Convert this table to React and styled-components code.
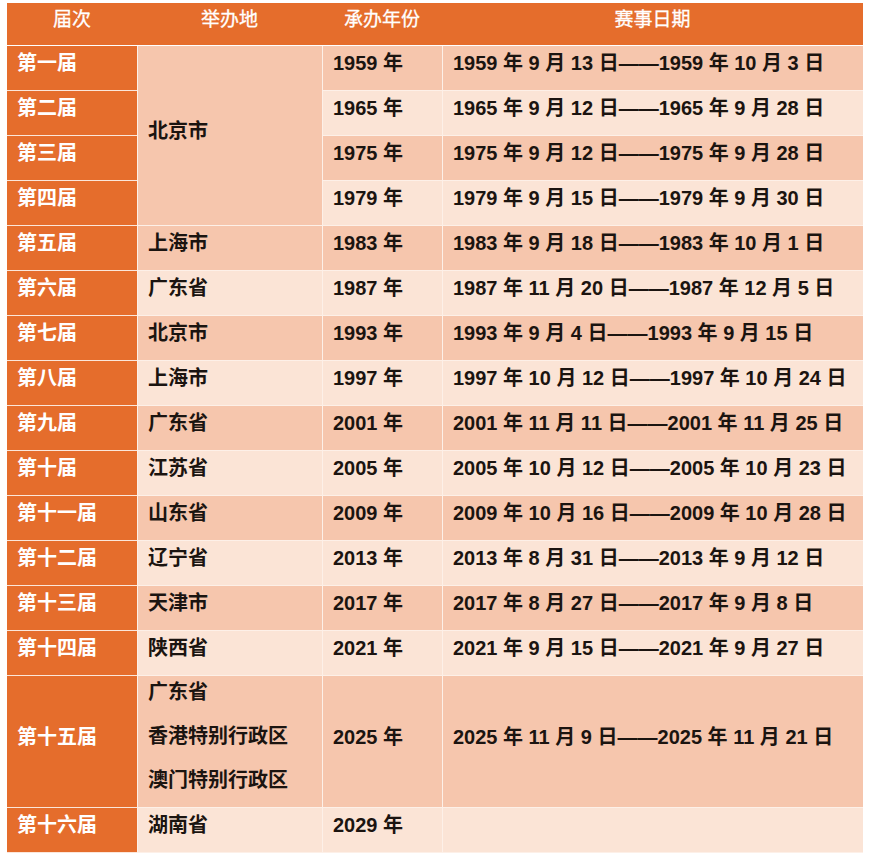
import React from "react";
import styled, { createGlobalStyle } from "styled-components";

const GlobalStyle = createGlobalStyle`
  html, body {
    margin: 0;
    padding: 0;
    background: #ffffff;
  }
  body {
    font-family: "Liberation Sans", "Noto Sans CJK SC", sans-serif;
  }
`;

const Page = styled.div`
  padding: 3px 11px 0 7px;
`;

const Table = styled.table`
  border-collapse: separate;
  border-spacing: 0;
  table-layout: fixed;
  width: 856px;
`;

const HeaderCell = styled.th`
  background: #e56d2c;
  color: #ffffff;
  font-family: "Liberation Sans", "Noto Sans CJK SC", sans-serif;
  font-size: 19px;
  font-weight: 400;
  -webkit-text-stroke: 0.3px #ffffff;
  line-height: 26px;
  height: 43px;
  box-sizing: border-box;
  padding: 0 0 8px 0;
  text-align: center;
  vertical-align: middle;
  border-bottom: 1px solid #ffffff;
`;

const RankCell = styled.td`
  background: #e56d2c;
  color: #ffffff;
  font-size: 20px;
  font-weight: bold;
  line-height: 26px;
  height: ${(p) => (p.$tall ? "132px" : "45px")};
  box-sizing: border-box;
  padding: 0 0 10px 10px;
  vertical-align: middle;
  border-bottom: 1px solid #fbe6da;
  white-space: nowrap;
`;

const Cell = styled.td`
  background: ${(p) => (p.$light ? "#fbe4d6" : "#f6c6ad")};
  color: #1b1410;
  font-size: 20px;
  font-weight: bold;
  line-height: 26px;
  height: 45px;
  box-sizing: border-box;
  padding: 0 0 ${(p) => (p.$tight ? "0" : "10px")} 10px;
  vertical-align: middle;
  border-bottom: 1px solid #fdf0e8;
  border-left: 1px solid #fdf0e8;
  white-space: nowrap;
`;

const Lines = styled.div`
  margin-top: -12px;
  line-height: 44px;
`;

const rows = [
  ["第一届", null, "1959 年", "1959 年 9 月 13 日——1959 年 10 月 3 日"],
  ["第二届", null, "1965 年", "1965 年 9 月 12 日——1965 年 9 月 28 日"],
  ["第三届", null, "1975 年", "1975 年 9 月 12 日——1975 年 9 月 28 日"],
  ["第四届", null, "1979 年", "1979 年 9 月 15 日——1979 年 9 月 30 日"],
  ["第五届", "上海市", "1983 年", "1983 年 9 月 18 日——1983 年 10 月 1 日"],
  ["第六届", "广东省", "1987 年", "1987 年 11 月 20 日——1987 年 12 月 5 日"],
  ["第七届", "北京市", "1993 年", "1993 年 9 月 4 日——1993 年 9 月 15 日"],
  ["第八届", "上海市", "1997 年", "1997 年 10 月 12 日——1997 年 10 月 24 日"],
  ["第九届", "广东省", "2001 年", "2001 年 11 月 11 日——2001 年 11 月 25 日"],
  ["第十届", "江苏省", "2005 年", "2005 年 10 月 12 日——2005 年 10 月 23 日"],
  ["第十一届", "山东省", "2009 年", "2009 年 10 月 16 日——2009 年 10 月 28 日"],
  ["第十二届", "辽宁省", "2013 年", "2013 年 8 月 31 日——2013 年 9 月 12 日"],
  ["第十三届", "天津市", "2017 年", "2017 年 8 月 27 日——2017 年 9 月 8 日"],
  ["第十四届", "陕西省", "2021 年", "2021 年 9 月 15 日——2021 年 9 月 27 日"],
];

export default function App() {
  return (
    <Page>
      <GlobalStyle />
      <Table>
        <colgroup>
          <col style={{ width: 130 }} />
          <col style={{ width: 185 }} />
          <col style={{ width: 120 }} />
          <col style={{ width: 421 }} />
        </colgroup>
        <thead>
          <tr>
            <HeaderCell>届次</HeaderCell>
            <HeaderCell>举办地</HeaderCell>
            <HeaderCell>承办年份</HeaderCell>
            <HeaderCell>赛事日期</HeaderCell>
          </tr>
        </thead>
        <tbody>
          {rows.map(([rank, place, year, date], i) => {
            const light = i % 2 === 1;
            return (
              <tr key={rank}>
                <RankCell>{rank}</RankCell>
                {i === 0 && <Cell rowSpan={4}>北京市</Cell>}
                {place && <Cell $light={light}>{place}</Cell>}
                <Cell $light={light}>{year}</Cell>
                <Cell $light={light}>{date}</Cell>
              </tr>
            );
          })}
          <tr>
            <RankCell $tall>第十五届</RankCell>
            <Cell $tight>
              <Lines>
                广东省
                <br />
                香港特别行政区
                <br />
                澳门特别行政区
              </Lines>
            </Cell>
            <Cell>2025 年</Cell>
            <Cell>2025 年 11 月 9 日——2025 年 11 月 21 日</Cell>
          </tr>
          <tr>
            <RankCell>第十六届</RankCell>
            <Cell $light>湖南省</Cell>
            <Cell $light>2029 年</Cell>
            <Cell $light></Cell>
          </tr>
        </tbody>
      </Table>
    </Page>
  );
}
